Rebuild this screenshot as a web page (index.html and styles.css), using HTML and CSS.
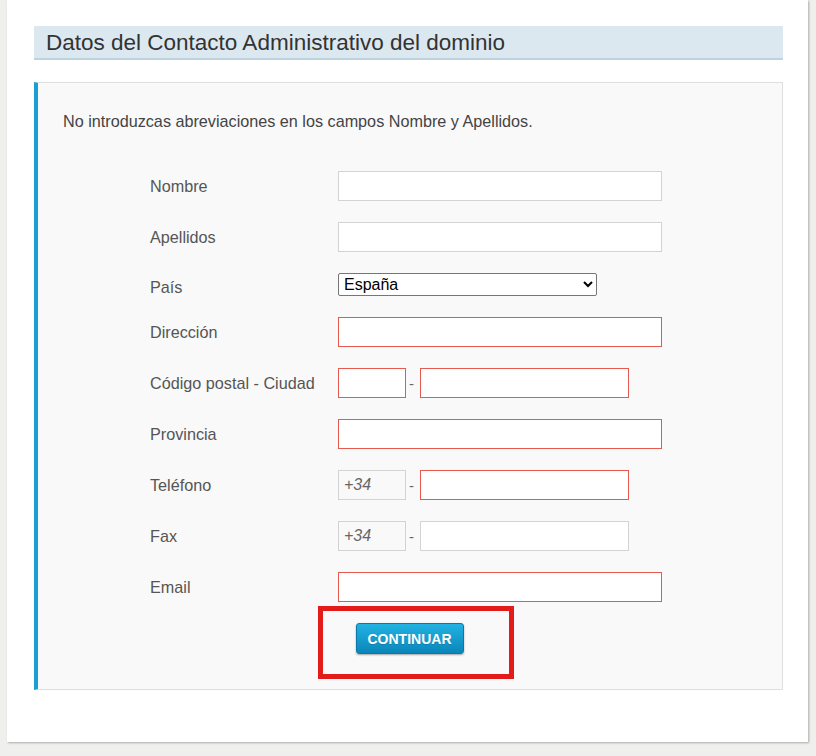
FILE: index.html
```html
<!DOCTYPE html>
<html lang="es">
<head>
<meta charset="utf-8">
<title>Datos del Contacto Administrativo</title>
<link rel="stylesheet" href="styles.css">
</head>
<body>
<div class="panel">
  <h2 class="section-title">Datos del Contacto Administrativo del dominio</h2>
  <div class="form-box">
    <p class="notice">No introduzcas abreviaciones en los campos Nombre y Apellidos.</p>
    <div class="form-grid">
      <label class="lbl">Nombre</label>
      <div class="field"><input class="inp wide" type="text"></div>

      <label class="lbl">Apellidos</label>
      <div class="field"><input class="inp wide" type="text"></div>

      <label class="lbl lbl-low">País</label>
      <div class="field field-top">
        <select class="sel"><option>España</option></select>
      </div>

      <label class="lbl">Dirección</label>
      <div class="field"><input class="inp wide req" type="text"></div>

      <label class="lbl">Código postal - Ciudad</label>
      <div class="field">
        <input class="inp short req" type="text">
        <span class="dash">-</span>
        <input class="inp mid req" type="text">
      </div>

      <label class="lbl">Provincia</label>
      <div class="field"><input class="inp wide req" type="text"></div>

      <label class="lbl">Teléfono</label>
      <div class="field">
        <input class="inp short prefix" type="text" value="+34">
        <span class="dash">-</span>
        <input class="inp mid req" type="text">
      </div>

      <label class="lbl">Fax</label>
      <div class="field">
        <input class="inp short prefix" type="text" value="+34">
        <span class="dash">-</span>
        <input class="inp mid" type="text">
      </div>

      <label class="lbl">Email</label>
      <div class="field"><input class="inp wide req" type="text"></div>
    </div>
    <div class="actions">
      <button class="btn" type="button">CONTINUAR</button>
      <span class="highlight"></span>
    </div>
  </div>
</div>
</body>
</html>
```

FILE: styles.css
```css
html, body {
  margin: 0;
  padding: 0;
}
body {
  background: #efefed;
  font-family: "Liberation Sans", Arial, sans-serif;
  height: 756px;
  overflow: hidden;
}
.panel {
  margin-left: 7px;
  width: 801px;
  height: 742px;
  box-sizing: border-box;
  background: #ffffff;
  padding: 26px 25px 0 27px;
  box-shadow: 1px 1px 2px rgba(0, 0, 0, 0.28);
}
.section-title {
  margin: 0;
  height: 32px;
  line-height: 33px;
  background: #dce8ef;
  border-bottom: 2px solid #bdd3df;
  padding-left: 12px;
  font-size: 22.5px;
  font-weight: normal;
  color: #333333;
}
.form-box {
  margin-top: 22px;
  background: #f9f9f9;
  border: 1px solid #dedede;
  border-left: 4px solid #1a9fd4;
  height: 608px;
  box-sizing: border-box;
  padding: 28px 0 0 25px;
  position: relative;
}
.notice {
  margin: 0;
  font-size: 16.2px;
  line-height: 20px;
  color: #444444;
}
.form-grid {
  display: grid;
  grid-template-columns: 188px 330px;
  grid-template-rows: 30px 30px 23px 30px 30px 30px 30px 30px 30px;
  row-gap: 21px;
  margin: 40px 0 0 87px;
}
.lbl {
  display: flex;
  align-items: center;
  font-size: 16.2px;
  color: #555555;
}
.lbl-low {
  align-items: flex-start;
  padding-top: 5px;
}
.field {
  display: flex;
  align-items: center;
}
.field-top {
  align-items: flex-start;
}
.inp {
  box-sizing: border-box;
  height: 30px;
  border: 1px solid #d3d3d3;
  background: #ffffff;
  margin: 0;
  padding: 0 5px;
  font-family: "Liberation Sans", Arial, sans-serif;
  font-size: 16px;
  outline: none;
}
.wide { width: 324px; }
.short { width: 68px; }
.mid { width: 209px; }
.req { border-color: #e5594f; }
.prefix {
  background: #f9f9f9;
  font-style: italic;
  color: #666666;
}
.dash {
  width: 14px;
  text-align: left;
  padding-left: 3px;
  box-sizing: border-box;
  font-size: 15px;
  color: #666666;
}
.sel {
  width: 259px;
  height: 23px;
  box-sizing: border-box;
  border: 1px solid #767676;
  border-radius: 2px;
  background: #ffffff;
  font-family: "Liberation Sans", Arial, sans-serif;
  font-size: 16px;
  color: #000000;
  padding: 0 1px;
}
.actions {
  position: relative;
  margin-top: 21px;
  display: flex;
  justify-content: center;
  padding-right: 26px;
}
.btn {
  width: 108px;
  height: 31px;
  border: 1px solid #0b79a8;
  border-radius: 3px;
  background: linear-gradient(#22b2e2, #0a86ba);
  box-shadow: 0 1px 2px rgba(0, 0, 0, 0.35);
  color: #ffffff;
  font-family: "Liberation Sans", Arial, sans-serif;
  font-weight: bold;
  font-size: 14px;
  padding: 0;
  text-shadow: 0 1px 0 rgba(0, 0, 0, 0.15);
}
.highlight {
  position: absolute;
  left: 255px;
  top: -17px;
  width: 196px;
  height: 73px;
  box-sizing: border-box;
  border: 5px solid #e31b1b;
}
```
